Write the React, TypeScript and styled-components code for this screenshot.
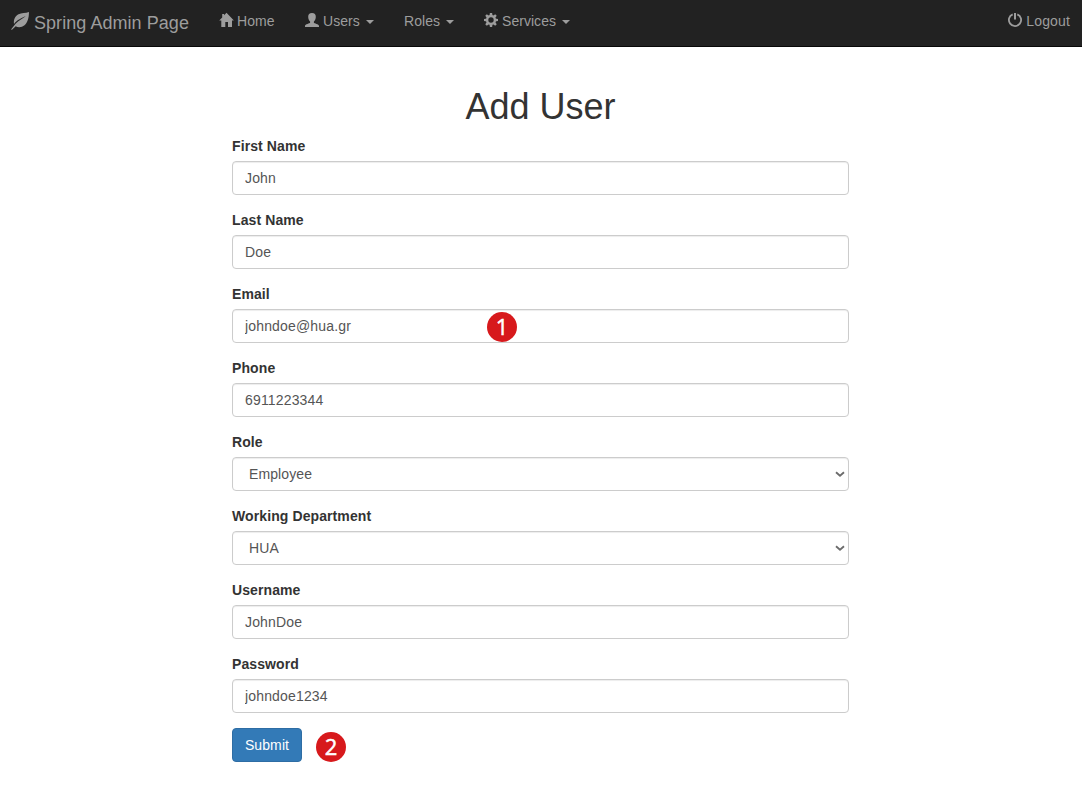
import React from "react";
import styled, { createGlobalStyle } from "styled-components";

const GlobalStyle = createGlobalStyle`
  *, *::before, *::after { box-sizing: border-box; }
  body {
    margin: 0;
    background: #fff;
    color: #333;
    font-family: "Liberation Sans", Arial, sans-serif;
    font-size: 14px;
    line-height: 20px;
  }
`;

const Navbar = styled.nav`
  display: flex;
  height: 47px;
  padding: 0 12px 0 11px;
  background: #222;
  border-bottom: 1px solid #080808;
  color: #9d9d9d;
`;

const Brand = styled.a`
  display: flex;
  gap: 5px;
  width: 208px;
  padding-top: 12px;
  font-size: 18px;
  line-height: 22px;
  letter-spacing: 0.05px;
  white-space: nowrap;
`;

const NavItem = styled.a<{ $width?: number; $gap?: number; $end?: boolean }>`
  display: flex;
  gap: ${(p) => p.$gap ?? 4}px;
  width: ${(p) => (p.$width ? `${p.$width}px` : "auto")};
  margin-left: ${(p) => (p.$end ? "auto" : "0")};
  letter-spacing: ${(p) => (p.$end ? "0.15px" : "0.04px")};
  padding-top: 11px;
  white-space: nowrap;
`;

const Icon = styled.svg<{ $size?: number; $top?: number }>`
  flex: none;
  overflow: visible;
  width: ${(p) => p.$size ?? 14}px;
  height: ${(p) => p.$size ?? 14}px;
  margin-top: ${(p) => p.$top ?? 2}px;
  fill: currentColor;
`;

const Caret = styled.span`
  width: 8px;
  height: 4px;
  margin: 9px 0 0 2px;
  border-top: 4px solid currentColor;
  border-left: 4px solid transparent;
  border-right: 4px solid transparent;
`;

const Form = styled.form`
  width: 617px;
  margin: 40px 0 0 232px;
`;

const Title = styled.h1`
  margin: 0 0 9px;
  font-size: 36px;
  font-weight: 500;
  line-height: 40px;
  text-align: center;
`;

const Group = styled.div`
  margin-bottom: 15px;
`;

const Label = styled.label`
  display: block;
  margin-bottom: 5px;
  font-weight: 700;
  letter-spacing: 0.1px;
`;

const Field = styled.div`
  position: relative;
`;

const Input = styled.input`
  display: block;
  width: 100%;
  height: 34px;
  padding: 6px 12px;
  border: 1px solid #ccc;
  border-radius: 4px;
  background: #fff;
  box-shadow: inset 0 1px 1px rgba(0, 0, 0, 0.075);
  color: #555;
  font: inherit;
  letter-spacing: 0.16px;
`;

const Select = styled.select`
  display: block;
  width: 100%;
  height: 34px;
  padding: 6px 16px;
  appearance: none;
  border: 1px solid #ccc;
  border-radius: 4px;
  background: #fff;
  box-shadow: inset 0 1px 1px rgba(0, 0, 0, 0.075);
  color: #555;
  font: inherit;
  letter-spacing: 0.1px;
`;

const Chevron = styled.svg`
  position: absolute;
  top: 14px;
  right: 4px;
  width: 10px;
  height: 7px;
  fill: none;
  stroke: #6b6b6b;
  stroke-width: 1.8;
`;

const Badge = styled.span`
  display: flex;
  justify-content: center;
  width: 30px;
  height: 30px;
  border-radius: 50%;
  background: #d7191c;
  color: #fff;
  font-family: "Open Sans", "Noto Sans", sans-serif;
  font-size: 22px;
  font-weight: 400;
  line-height: 28px;
  -webkit-text-stroke: 0.5px #fff;
`;

const FieldBadge = styled(Badge)`
  position: absolute;
  top: 3px;
  left: 255px;
`;

const Actions = styled.div`
  display: flex;
  gap: 14px;
`;

const ActionBadge = styled(Badge)`
  margin-top: 4px;
`;

const Submit = styled.button`
  width: 70px;
  height: 34px;
  padding: 0;
  border: 1px solid #2e6da4;
  border-radius: 4px;
  background: #337ab7;
  color: #fff;
  font: inherit;
  letter-spacing: 0.1px;
`;

const fields = [
  { label: "First Name", value: "John" },
  { label: "Last Name", value: "Doe" },
  { label: "Email", value: "johndoe@hua.gr", badge: "1" },
  { label: "Phone", value: "6911223344" },
  { label: "Role", value: "Employee", select: true },
  { label: "Working Department", value: "HUA", select: true },
  { label: "Username", value: "JohnDoe" },
  { label: "Password", value: "johndoe1234" },
];

const teeth = [0, 45, 90, 135, 180, 225, 270, 315];

export default function App() {
  return (
    <>
      <GlobalStyle />
      <Navbar>
        <Brand>
          <Icon viewBox="0 0 18 18" $size={18} $top={0}>
            <path d="M18 0C17.9 6.500 16.500 10.500 13.500 13.300C11 15.400 7 15.700 4.700 14.200L1 17.800L0 17.500L3.400 13.300C6.500 9 11 7.500 14.700 4.100C11 6.200 6 7.800 3 12C2.400 7.500 4 4 7.500 2.200C10.500 .7 14.500 1.400 18 0Z" />
          </Icon>
          <span>Spring Admin Page</span>
        </Brand>
        <NavItem $width={86} $gap={4}>
          <Icon viewBox="0 0 14 14">
            <path d="M7.500 -.3L14.900 7.500H13V14H9V9H6.300V14H2.300V7.500H.2L3.200 4.400V1H5.100V2.300Z" />
          </Icon>
          <span>Home</span>
        </NavItem>
        <NavItem $width={99}>
          <Icon viewBox="0 0 14 14">
            <path d="M7 0C9.600 0 10.900 1.500 10.800 3.900C10.700 6.100 9.900 7.600 8.900 8.500V9.700C9.100 10.500 14 10.900 14 13V14H0V13C0 10.900 4.900 10.500 5.100 9.700V8.500C4.100 7.600 3.300 6.100 3.200 3.900C3.100 1.500 4.400 0 7 0Z" />
          </Icon>
          <span>Users</span>
          <Caret />
        </NavItem>
        <NavItem $width={80}>
          <span>Roles</span>
          <Caret />
        </NavItem>
        <NavItem>
          <Icon viewBox="0 0 14 14">
            {teeth.map((angle) => (
              <path key={angle} d="M5.900 0H8.100L8.600 3H5.400Z" transform={`rotate(${angle} 7 7)`} />
            ))}
            <path
              fillRule="evenodd"
              d="M7 1.900A5.100 5.100 0 1 0 7 12.100A5.100 5.100 0 1 0 7 1.900ZM7 4.300A2.700 2.700 0 1 1 7 9.700A2.700 2.700 0 1 1 7 4.300Z"
            />
          </Icon>
          <span>Services</span>
          <Caret />
        </NavItem>
        <NavItem $end>
          <Icon viewBox="0 0 14 14">
            <path
              d="M4.700 1.300A6.100 6.100 0 1 0 9.300 1.300"
              fill="none"
              stroke="currentColor"
              strokeWidth="1.800"
            />
            <rect x="6" y="0" width="2" height="6.500" />
          </Icon>
          <span>Logout</span>
        </NavItem>
      </Navbar>
      <Form onSubmit={(e) => e.preventDefault()}>
        <Title>Add User</Title>
        {fields.map((f) => (
          <Group key={f.label}>
            <Label htmlFor={f.label}>{f.label}</Label>
            <Field>
              {f.select ? (
                <>
                  <Select id={f.label} defaultValue={f.value}>
                    <option>{f.value}</option>
                  </Select>
                  <Chevron viewBox="0 0 10 7">
                    <path d="M1 1.300L5 4.800L9 1.300" />
                  </Chevron>
                </>
              ) : (
                <Input id={f.label} defaultValue={f.value} />
              )}
              {f.badge && <FieldBadge>{f.badge}</FieldBadge>}
            </Field>
          </Group>
        ))}
        <Actions>
          <Submit type="submit">Submit</Submit>
          <ActionBadge>2</ActionBadge>
        </Actions>
      </Form>
    </>
  );
}
